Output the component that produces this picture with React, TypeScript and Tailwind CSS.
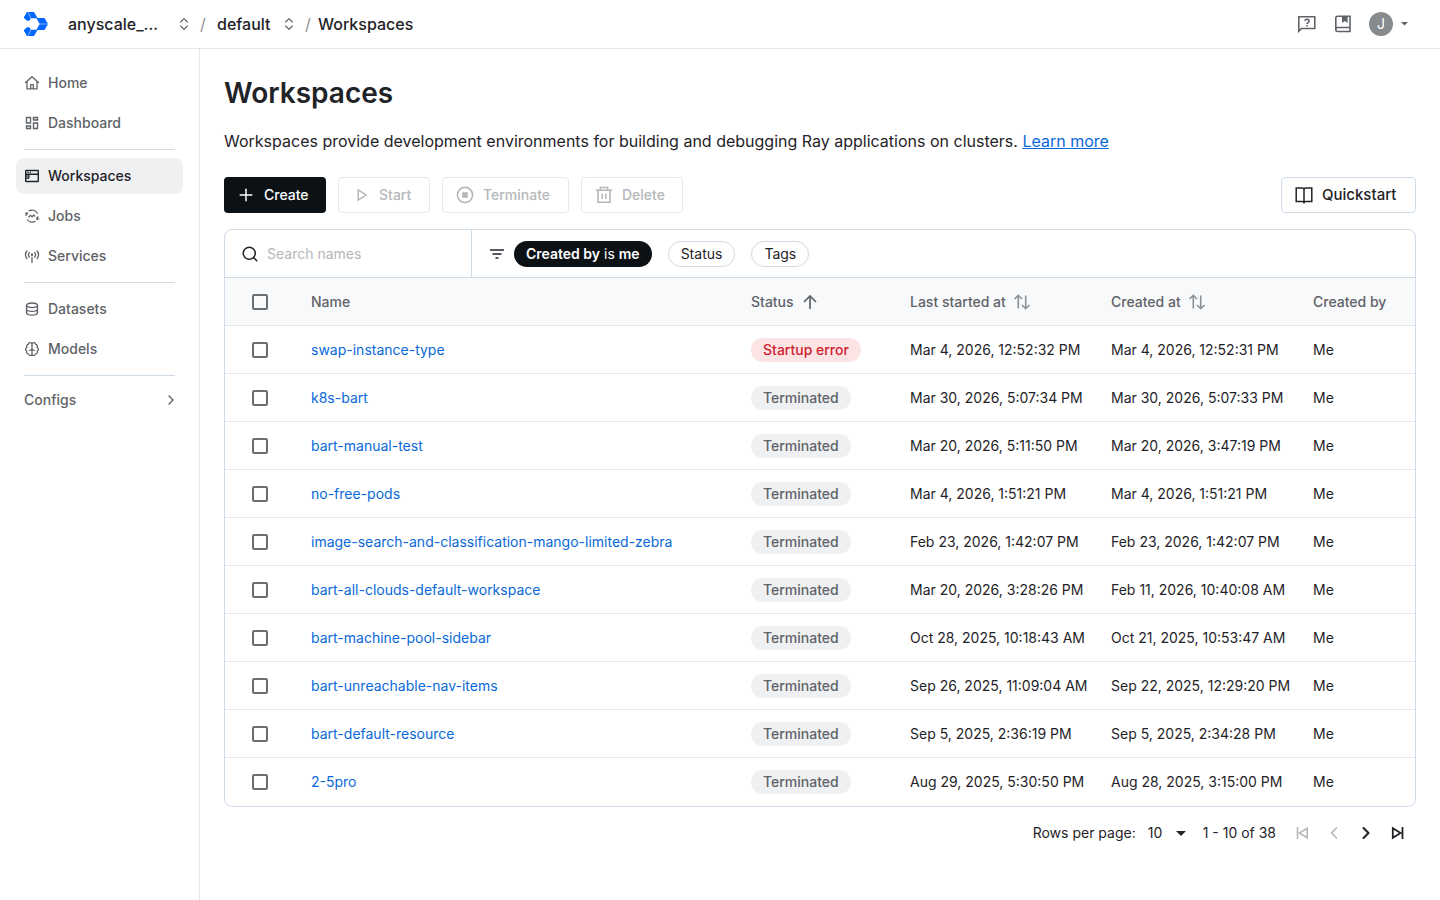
/**
 * Workspaces page: top bar with breadcrumbs, side navigation and the workspace table.
 */
import React from 'react'
import { ChevronLeft, ChevronRight, ChevronsUpDown, Plus, Search } from 'lucide-react'

interface Workspace {
  name: string
  status: 'Startup error' | 'Terminated'
  startedAt: string
  createdAt: string
}

interface IconProps {
  size?: number
  className?: string
  box?: number
  stroke?: number
  children: React.ReactNode
}

const workspaces: Workspace[] = [
  { name: 'swap-instance-type', status: 'Startup error', startedAt: 'Mar 4, 2026, 12:52:32 PM', createdAt: 'Mar 4, 2026, 12:52:31 PM' },
  { name: 'k8s-bart', status: 'Terminated', startedAt: 'Mar 30, 2026, 5:07:34 PM', createdAt: 'Mar 30, 2026, 5:07:33 PM' },
  { name: 'bart-manual-test', status: 'Terminated', startedAt: 'Mar 20, 2026, 5:11:50 PM', createdAt: 'Mar 20, 2026, 3:47:19 PM' },
  { name: 'no-free-pods', status: 'Terminated', startedAt: 'Mar 4, 2026, 1:51:21 PM', createdAt: 'Mar 4, 2026, 1:51:21 PM' },
  { name: 'image-search-and-classification-mango-limited-zebra', status: 'Terminated', startedAt: 'Feb 23, 2026, 1:42:07 PM', createdAt: 'Feb 23, 2026, 1:42:07 PM' },
  { name: 'bart-all-clouds-default-workspace', status: 'Terminated', startedAt: 'Mar 20, 2026, 3:28:26 PM', createdAt: 'Feb 11, 2026, 10:40:08 AM' },
  { name: 'bart-machine-pool-sidebar', status: 'Terminated', startedAt: 'Oct 28, 2025, 10:18:43 AM', createdAt: 'Oct 21, 2025, 10:53:47 AM' },
  { name: 'bart-unreachable-nav-items', status: 'Terminated', startedAt: 'Sep 26, 2025, 11:09:04 AM', createdAt: 'Sep 22, 2025, 12:29:20 PM' },
  { name: 'bart-default-resource', status: 'Terminated', startedAt: 'Sep 5, 2025, 2:36:19 PM', createdAt: 'Sep 5, 2025, 2:34:28 PM' },
  { name: '2-5pro', status: 'Terminated', startedAt: 'Aug 29, 2025, 5:30:50 PM', createdAt: 'Aug 28, 2025, 3:15:00 PM' },
]

function Icon({ size = 16, className = '', box = 16, stroke = 1.3, children }: IconProps) {
  return (
    <svg
      width={size}
      height={size}
      viewBox={`0 0 ${box} ${box}`}
      fill="none"
      stroke="currentColor"
      strokeWidth={stroke}
      className={`shrink-0 ${className}`}
      aria-hidden="true"
    >
      {children}
    </svg>
  )
}

const HomeIcon = () => (
  <Icon>
    <path d="M1.500 7.500 8 1.700l6.500 5.800M3 6.300v7.500h10V6.300M6.700 13.800V9.700h2.600v4.100" strokeLinejoin="round" strokeLinecap="round" />
  </Icon>
)

const DashboardIcon = () => (
  <Icon stroke={1.4}>
    <path d="M2.500 2.500h4V8h-4zM9.500 2.500h4V5h-4zM2.500 11h4v2.500h-4zM9.500 8h4v5.500h-4z" />
  </Icon>
)

const WorkspaceIcon = () => (
  <Icon stroke={1.4}>
    <rect x="1.700" y="2.500" width="12.600" height="11" rx="0.500" />
    <path d="M2 6.300h12M3.500 4.400h1.200M5.700 4.400h1.200" />
    <path d="M2 6.500h3.200v3.300H2z" fill="currentColor" stroke="none" opacity="0.600" />
    <path d="M5 6.500v3.800H2" strokeWidth="1" />
  </Icon>
)

const JobsIcon = () => (
  <Icon stroke={1.2}>
    <path d="M3 11.500A6 6 0 0 0 11.500 13M2 8a6 6 0 0 1 .9-3M4.600 3.100A6 6 0 0 1 13.500 5.700M14 8.300a6 6 0 0 1-1 2.900" />
    <path d="M1 5.500 2.900 4.700l.8 1.900M15.200 10.700l-2.100.7-.8-1.800" />
    <path d="M4.500 9.300 6.500 7.300l1.600 1.500 1.700-1.700 1.500 1.300" strokeWidth="1.300" />
  </Icon>
)

const ServicesIcon = () => (
  <Icon>
    <path d="M2.900 3a6.200 6.200 0 0 0 0 7.600M13.100 3a6.200 6.200 0 0 1 0 7.600M5.200 4.600a3.800 3.800 0 0 0 0 4.400M10.800 4.600a3.800 3.800 0 0 1 0 4.400M8 9.500v5" strokeLinecap="round" />
    <circle cx="8" cy="6.800" r="1.200" fill="currentColor" stroke="none" />
  </Icon>
)

const DatasetsIcon = () => (
  <Icon>
    <ellipse cx="8" cy="4.300" rx="5.500" ry="2.300" />
    <path d="M2.500 4.300v7.400c0 1.300 2.400 2.400 5.500 2.400s5.500-1.100 5.500-2.400V4.300M2.500 8c0 1.300 2.400 2.400 5.500 2.400s5.500-1.100 5.500-2.400" />
  </Icon>
)

const ModelsIcon = () => (
  <Icon>
    <path
      d="M8 3.200C8 1.200 4.600 1 4.300 3.300 2.500 3.700 2.200 5.400 2.900 6.500 1.200 7.200 1.200 9.300 2.700 10c-.5 1.600.4 2.800 1.700 2.900C4.900 15 8 14.900 8 12.900zM8 3.200C8 1.200 11.400 1 11.700 3.300c1.800.4 2.100 2.100 1.400 3.200 1.700.7 1.700 2.800.2 3.500.5 1.600-.4 2.800-1.700 2.900C11.100 15 8 14.900 8 12.900M8 8.300 5.300 9.800M8 8.300l2.700 1.500"
      strokeLinejoin="round"
    />
  </Icon>
)

const HelpIcon = () => (
  <Icon size={20} box={20} stroke={1.6}>
    <path d="M1.800 17.300V2.800h16v11.700H4.400z" />
    <path d="M7.900 6.900c.2-2.300 4.200-2.200 4.200.1 0 1.600-2.100 1.500-2.100 2.900M10 11v1.500" />
  </Icon>
)

const DocsIcon = () => (
  <Icon size={20} box={20} stroke={1.6}>
    <path d="M17 13.500V2.300H4.800c-1.200 0-2 .8-2 2v11.200c0 1.200.8 2 2 2H17v-4H4.800c-1.200 0-2 .8-2 2" />
    <path d="M9 2.300h5.600V9l-2.800-2L9 9z" fill="currentColor" stroke="none" />
  </Icon>
)

const StopIcon = () => (
  <Icon size={20} box={20} stroke={1.6}>
    <circle cx="10" cy="10" r="7.600" />
    <rect x="7.200" y="7.200" width="5.600" height="5.600" fill="currentColor" stroke="none" />
  </Icon>
)

const TrashIcon = () => (
  <Icon size={20} box={20} stroke={1.6}>
    <path d="M1.800 5.300h16.400M6.300 5V2.500h7.400V5M4 5.300v12h12v-12M8.200 8.700V14M11.800 8.700V14" />
  </Icon>
)

const BookIcon = () => (
  <Icon size={20} box={20} stroke={1.5}>
    <path d="M10 4.700c0-1.100-.7-1.700-1.700-1.700H2.200v13.500h6.100c1 0 1.700.5 1.700 1.300 0-.8.700-1.300 1.700-1.300h6.100V3h-6.100c-1 0-1.700.6-1.700 1.700zV18.500" />
  </Icon>
)

const SortIcon = () => (
  <Icon size={20} box={20} stroke={1.6} className="text-[#8b9094]">
    <path d="M6.300 16.500V3.500M2.500 7l3.800-3.700L10 7M13.700 3.500v13M10 13l3.700 3.700L17.500 13" />
  </Icon>
)

const CaretIcon = ({ className = '' }: { className?: string }) => (
  <svg width="10" height="5" viewBox="0 0 10 5" fill="currentColor" className={className} aria-hidden="true">
    <path d="M0 0h10L5 5z" />
  </svg>
)

function Logo() {
  return (
    <svg width="24" height="24" viewBox="0 0 24 24" role="img" aria-label="Home">
      <g fill="#0066ff">
        <path d="M3 0h7l3.300 5.800-2.300 3H3L0 6V5z" />
        <path d="M3 24h7l3.300-5.800-2.300-3H3L0 18v1z" />
        <path d="M12 6h8.500l3.500 6-3.500 6H12l-2-6z" />
      </g>
      <path d="M6.800 6.300h5.600L15.700 12l-3.300 5.700H6.800L3.800 12z" fill="#fff" />
      <path d="M4.200.5 7 6.300M4.200 23.500 7 17.700M15.500 12H24" stroke="#fff" strokeWidth="0.500" />
    </svg>
  )
}

function Breadcrumbs() {
  return (
    <nav aria-label="Breadcrumb" className="flex items-center text-base font-medium text-[#1f2328]">
      <button type="button" className="flex w-[124px] items-center justify-between">
        anyscale_...
        <ChevronsUpDown size={16} strokeWidth={1.75} className="text-[#5f6368]" />
      </button>
      <span className="w-[25px] pl-2 font-normal text-[#8b9094]">/</span>
      <button type="button" className="flex w-[80px] items-center justify-between">
        default
        <ChevronsUpDown size={16} strokeWidth={1.75} className="text-[#5f6368]" />
      </button>
      <span className="w-[21px] pl-2 font-normal text-[#8b9094]">/</span>
      <span aria-current="page">Workspaces</span>
    </nav>
  )
}

function TopBar() {
  return (
    <header className="flex h-[49px] items-center justify-between border-b border-[#e1e7ec] pl-6 pr-8">
      <div className="flex items-center gap-5">
        <a href="#"><Logo /></a>
        <Breadcrumbs />
      </div>
      <div className="flex items-center gap-4 text-[#5f6368]">
        <button type="button" aria-label="Help"><HelpIcon /></button>
        <button type="button" aria-label="Documentation"><DocsIcon /></button>
        <button type="button" className="flex items-center gap-2">
          <span className="flex size-6 items-center justify-center rounded-full bg-[#878b8e] text-sm text-white">J</span>
          <svg width="7" height="4" viewBox="0 0 7 4" fill="currentColor" aria-hidden="true"><path d="M0 0h7L3.500 3.500z" /></svg>
        </button>
      </div>
    </header>
  )
}

interface NavItemProps {
  icon: React.ReactNode
  label: string
  active?: boolean
}

function NavItem({ icon, label, active = false }: NavItemProps) {
  return (
    <a
      href="#"
      aria-current={active ? 'page' : undefined}
      className={`flex h-9 items-center gap-2 rounded-lg px-2 ${active ? 'bg-[#eff0f2] text-[#1f2328]' : 'text-[#5f6368]'}`}
    >
      {icon}
      {label}
    </a>
  )
}

function Sidebar() {
  const divider = <hr className="mx-2 my-2 border-[#cfdbe6]" />
  return (
    <nav aria-label="Main" className="w-[200px] shrink-0 border-r border-[#e5e7eb] px-4 pt-4 text-sm font-medium">
      <div className="flex flex-col gap-1">
        <NavItem icon={<HomeIcon />} label="Home" />
        <NavItem icon={<DashboardIcon />} label="Dashboard" />
      </div>
      {divider}
      <div className="flex flex-col gap-1">
        <NavItem icon={<WorkspaceIcon />} label="Workspaces" active />
        <NavItem icon={<JobsIcon />} label="Jobs" />
        <NavItem icon={<ServicesIcon />} label="Services" />
      </div>
      {divider}
      <div className="flex flex-col gap-1">
        <NavItem icon={<DatasetsIcon />} label="Datasets" />
        <NavItem icon={<ModelsIcon />} label="Models" />
      </div>
      {divider}
      <button type="button" className="flex h-8 w-full items-center justify-between pl-2 pr-1 text-[#5f6368]">
        Configs
        <ChevronRight size={16} strokeWidth={2} />
      </button>
    </nav>
  )
}

function Toolbar() {
  const disabled = 'flex h-9 items-center rounded border border-[#e6e7e8] text-[#b5b8ba]'
  return (
    <div className="mt-6 flex items-center gap-3 text-sm font-medium">
      <button type="button" className="flex h-9 w-[102px] items-center gap-2 rounded bg-[#0c1116] pl-3 text-white">
        <Plus size={20} strokeWidth={1.75} />
        Create
      </button>
      <button type="button" disabled className={`${disabled} w-[92px] gap-2 pl-3`}>
        <Icon size={20} box={20} stroke={1.5}><path d="M7.200 4.800v10.400l7.800-5.200z" /></Icon>
        Start
      </button>
      <button type="button" disabled className={`${disabled} w-[127px] gap-2 pl-3`}>
        <StopIcon />
        Terminate
      </button>
      <button type="button" disabled className={`${disabled} w-[102px] gap-2 pl-3`}>
        <TrashIcon />
        Delete
      </button>
      <button type="button" className="ml-auto flex h-9 w-[135px] items-center gap-2 rounded border border-[#cfdbe6] pl-3 text-[15px] text-[#1f2328]">
        <BookIcon />
        Quickstart
      </button>
    </div>
  )
}

function Filters() {
  return (
    <div className="flex h-12 border-b border-[#cfdbe6] text-sm">
      <label className="flex w-[247px] items-center gap-2 border-r border-[#cfdbe6] pl-4">
        <Search size={18} strokeWidth={2} className="text-[#1f2328]" />
        <input
          type="search"
          aria-label="Search names"
          placeholder="Search names"
          className="min-w-0 flex-1 outline-none placeholder:text-[#b5b8ba]"
        />
      </label>
      <div className="flex items-center pl-4">
        <Icon size={18} box={18} stroke={1.6} className="mr-2 text-[#1f2328]">
          <path d="M2 5h14M4.500 9h9M7.500 13h3" />
        </Icon>
        <button type="button" className="mr-4 h-[26px] rounded-full bg-[#0c1116] px-3 text-white">
          <span className="font-semibold">Created by</span> is <span className="font-semibold">me</span>
        </button>
        <button type="button" className="mr-4 h-[26px] rounded-full border border-[#cfdbe6] px-3 text-[#1f2328]">Status</button>
        <button type="button" className="h-[26px] rounded-full border border-[#cfdbe6] px-3 text-[#1f2328]">Tags</button>
      </div>
    </div>
  )
}

function Checkbox({ label }: { label: string }) {
  return (
    <input
      type="checkbox"
      aria-label={label}
      className="block size-4 appearance-none rounded-xs border-2 border-[#6b6f73] checked:bg-[#6b6f73]"
    />
  )
}

function StatusBadge({ status }: { status: Workspace['status'] }) {
  const color = status === 'Startup error' ? 'bg-[#fce4e5] text-[#cf222e]' : 'bg-[#eff0f2] text-[#5f6368]'
  return <span className={`flex h-6 w-fit items-center rounded-full px-3 font-medium ${color}`}>{status}</span>
}

function WorkspaceTable() {
  return (
    <table className="w-full table-fixed border-separate border-spacing-0 text-left text-sm text-[#1f2328]">
      <colgroup>
        <col className="w-[70px]" />
        <col />
        <col className="w-[159px]" />
        <col className="w-[201px]" />
        <col className="w-[202px]" />
        <col className="w-[118px]" />
      </colgroup>
      <thead className="bg-[#f8f9fb] text-[#5f6368]">
        <tr className="h-12 *:border-b *:border-[#e5e7eb]">
          <th className="pl-[27px]"><Checkbox label="Select all workspaces" /></th>
          <th className="pl-4 font-medium">Name</th>
          <th className="pl-4 font-medium" aria-sort="ascending">
            <button type="button" className="flex items-center gap-1.5">
              Status
              <Icon size={20} box={20} stroke={1.7}><path d="M10 17V4M4 10l6-6 6 6" /></Icon>
            </button>
          </th>
          <th className="pl-4 font-medium">
            <button type="button" className="flex items-center gap-1.5">Last started at<SortIcon /></button>
          </th>
          <th className="pl-4 font-medium">
            <button type="button" className="flex items-center gap-1.5">Created at<SortIcon /></button>
          </th>
          <th className="pl-4 font-medium">Created by</th>
        </tr>
      </thead>
      <tbody>
        {workspaces.map((workspace) => (
          <tr key={workspace.name} className="h-12 *:border-b *:border-[#e5e7eb] last:*:border-b-0">
            <td className="pl-[27px]"><Checkbox label={`Select ${workspace.name}`} /></td>
            <td className="truncate pl-4"><a href="#" className="text-[#0969da]">{workspace.name}</a></td>
            <td className="pl-4"><StatusBadge status={workspace.status} /></td>
            <td className="whitespace-nowrap pl-4">{workspace.startedAt}</td>
            <td className="whitespace-nowrap pl-4">{workspace.createdAt}</td>
            <td className="pl-4">Me</td>
          </tr>
        ))}
      </tbody>
    </table>
  )
}

function Pagination() {
  return (
    <div className="flex h-[52px] items-center justify-end pr-2 text-sm text-[#1f2328]">
      <label htmlFor="rows-per-page" className="mr-3">Rows per page:</label>
      <div className="relative mr-4 flex items-center">
        <select id="rows-per-page" defaultValue="10" className="w-[39px] appearance-none">
          <option>10</option>
          <option>25</option>
          <option>50</option>
        </select>
        <CaretIcon className="pointer-events-none absolute right-px" />
      </div>
      <span className="mr-4">1 - 10 of 38</span>
      <div className="flex gap-3">
        <button type="button" disabled aria-label="First page" className="text-[#b5b8ba]">
          <Icon size={20} box={20} stroke={1.6}><path d="M5.500 4v12M15.200 5.200v9.600L7.500 10z" /></Icon>
        </button>
        <button type="button" disabled aria-label="Previous page" className="text-[#b5b8ba]">
          <ChevronLeft size={20} strokeWidth={2} />
        </button>
        <button type="button" aria-label="Next page"><ChevronRight size={20} strokeWidth={2.5} /></button>
        <button type="button" aria-label="Last page">
          <Icon size={20} box={20} stroke={1.8}><path d="M14.500 4v12M4.800 5.200v9.600l7.700-4.800z" /></Icon>
        </button>
      </div>
    </div>
  )
}

export default function App() {
  return (
    <div className="flex min-h-screen flex-col bg-white font-['Inter',sans-serif] text-[#1f2328]">
      <TopBar />
      <div className="flex flex-1">
        <Sidebar />
        <main className="min-w-0 flex-1 px-6 pt-6">
          <h1 className="text-[28px] font-semibold leading-10">Workspaces</h1>
          <p className="mt-4 text-base">
            Workspaces provide development environments for building and debugging Ray applications on clusters.{' '}
            <a href="#" className="text-[#0969da] underline">Learn more</a>
          </p>
          <Toolbar />
          <section className="mt-4 overflow-hidden rounded-lg border border-[#cfdbe6]">
            <Filters />
            <WorkspaceTable />
          </section>
          <Pagination />
        </main>
      </div>
    </div>
  )
}
